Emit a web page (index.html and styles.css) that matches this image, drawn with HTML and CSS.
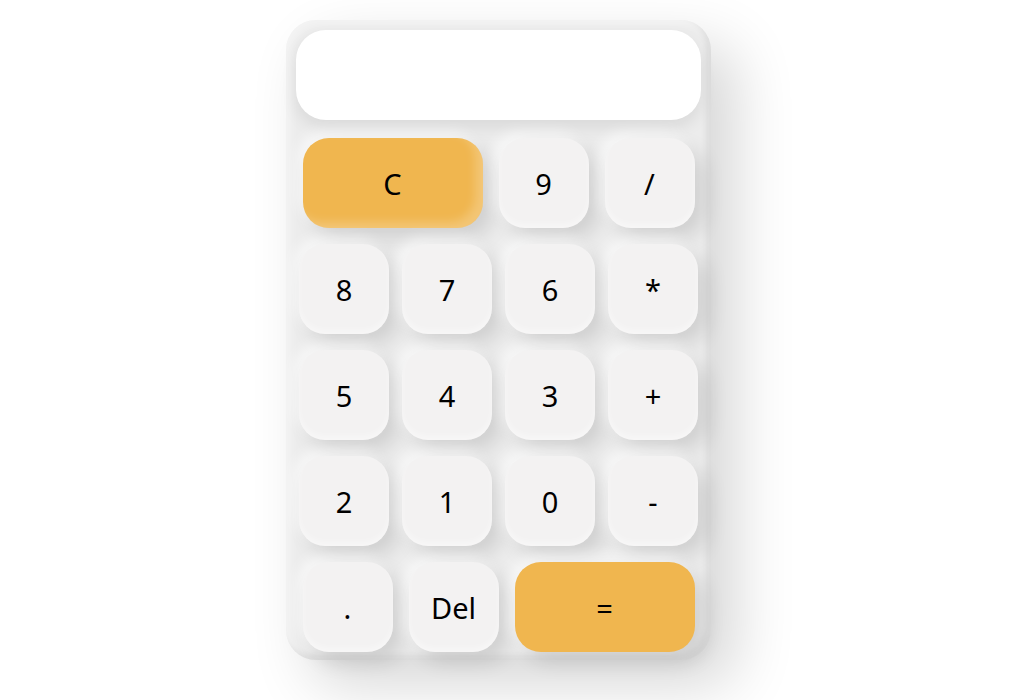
FILE: index.html
```html
<!DOCTYPE html>
<html lang="en">
<head>
<meta charset="utf-8">
<title>Calculator</title>
<link rel="stylesheet" href="styles.css">
</head>
<body>
<div class="calc">
  <div class="display"></div>
  <div class="keys">
    <div class="row row-wide">
      <button class="key key-wide key-accent key-clear">C</button>
      <button class="key">9</button>
      <button class="key">/</button>
    </div>
    <div class="row">
      <button class="key">8</button>
      <button class="key">7</button>
      <button class="key">6</button>
      <button class="key">*</button>
    </div>
    <div class="row">
      <button class="key">5</button>
      <button class="key">4</button>
      <button class="key">3</button>
      <button class="key">+</button>
    </div>
    <div class="row">
      <button class="key">2</button>
      <button class="key">1</button>
      <button class="key">0</button>
      <button class="key">-</button>
    </div>
    <div class="row row-wide">
      <button class="key">.</button>
      <button class="key">Del</button>
      <button class="key key-wide key-accent key-equal">=</button>
    </div>
  </div>
</div>
</body>
</html>
```

FILE: styles.css
```css
html, body {
  margin: 0;
  height: 100%;
}
body {
  background: #ffffff;
  font-family: "Noto Sans", "Open Sans", sans-serif;
  padding: 20px 0 0 286px;
  box-sizing: border-box;
  overflow: hidden;
}
.calc {
  width: 425px;
  height: 640px;
  box-sizing: border-box;
  padding: 10px 10px 8px;
  background: #ececec;
  border-radius: 30px;
  box-shadow: 25px 25px 60px rgba(0, 0, 0, 0.16),
              -15px -15px 40px rgba(255, 255, 255, 0.9),
              inset -5px -5px 6px rgba(0, 0, 0, 0.07),
              inset 5px 5px 8px rgba(255, 255, 255, 0.4);
  display: flex;
  flex-direction: column;
}
.display {
  height: 90px;
  background: #ffffff;
  border-radius: 30px;
  box-shadow: 0 8px 16px rgba(0, 0, 0, 0.08);
  margin-bottom: 18px;
}
.keys {
  display: flex;
  flex-direction: column;
  align-items: center;
  gap: 16px;
}
.row {
  display: flex;
  gap: 13px;
}
.row-wide {
  gap: 16px;
}
.key {
  width: 90px;
  height: 90px;
  border: none;
  border-radius: 26px;
  background: #f3f2f2;
  color: #000;
  font-family: inherit;
  font-size: 29px;
  padding: 0;
  box-shadow: 10px 10px 20px rgba(0, 0, 0, 0.12),
              -6px -6px 14px rgba(255, 255, 255, 0.6),
              inset 0 -4px 6px rgba(255, 255, 255, 0.4);
}
.key-wide {
  width: 180px;
}
.key-accent {
  background: #f0b64f;
}
.key-clear {
  box-shadow: 10px 10px 20px rgba(0, 0, 0, 0.12),
              -6px -6px 14px rgba(255, 255, 255, 0.6),
              inset -8px -6px 10px rgba(255, 255, 255, 0.22);
}
.key-equal {
  box-shadow: 10px 10px 20px rgba(0, 0, 0, 0.12),
              -6px -6px 14px rgba(255, 255, 255, 0.6);
}
```
